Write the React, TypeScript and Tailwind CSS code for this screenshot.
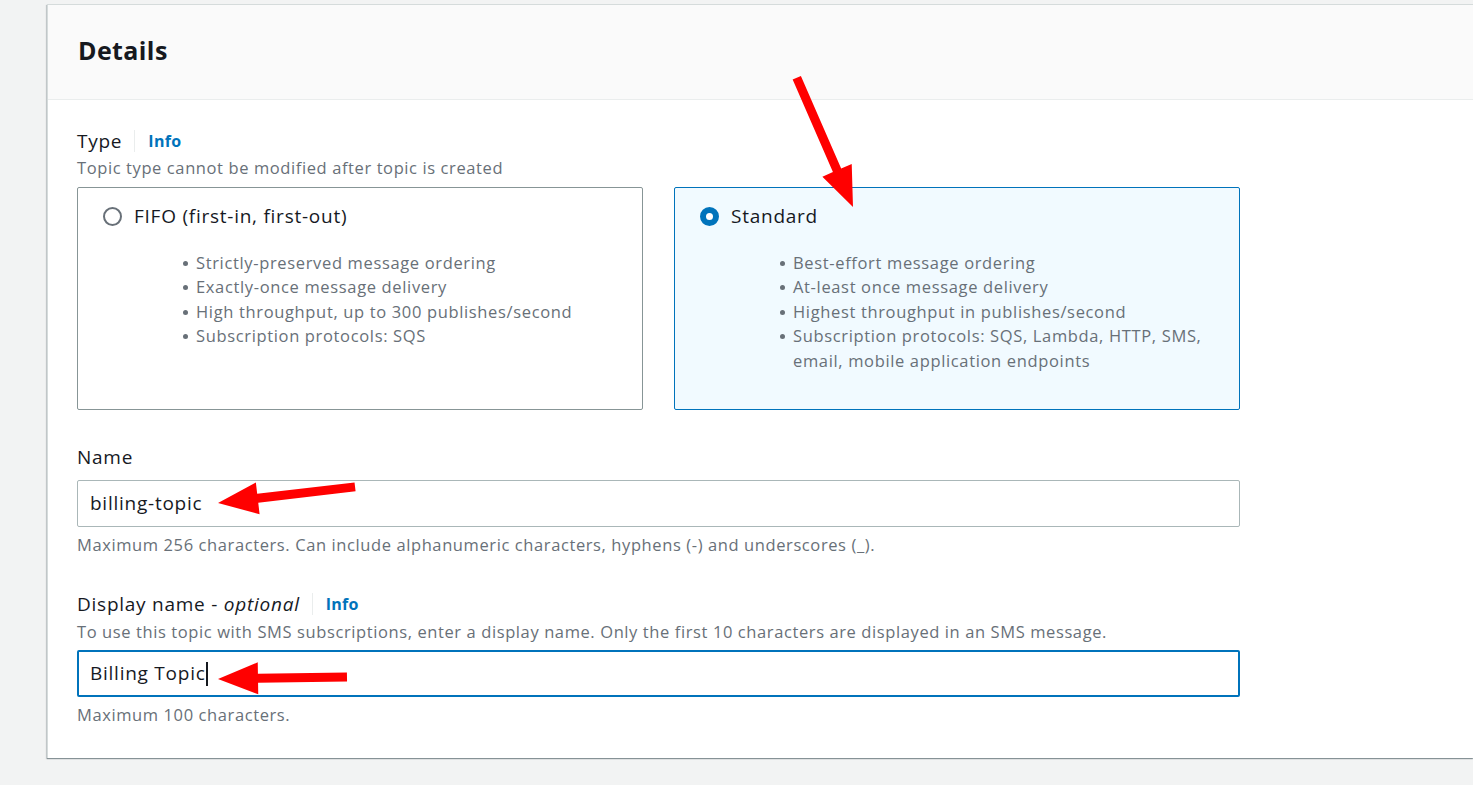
import React from "react";

const font = { fontFamily: '"Open Sans", "Noto Sans", Arial, sans-serif' };

function Arrow({ x, y, angle, length }: { x: number; y: number; angle: number; length: number }) {
  // drawn pointing along +x, tip at origin
  return (
    <g transform={`translate(${x} ${y}) rotate(${angle})`}>
      <polygon
        points={`${-length},-4.5 -40,-4.5 -40,-16 0,0 -40,16 -40,4.5 ${-length},4.5`}
        fill="#ff0000"
      />
    </g>
  );
}

function Radio({ checked }: { checked: boolean }) {
  if (checked) {
    return <span className="w-[19px] h-[19px] rounded-full border-[6px] border-[#0073bb] bg-white shrink-0" />;
  }
  return <span className="w-[19px] h-[19px] rounded-full border-2 border-[#687078] bg-white shrink-0" />;
}

function Tile({ label, items, checked }: { label: string; items: React.ReactNode[]; checked: boolean }) {
  return (
    <div
      className={`flex-1 h-[223px] rounded-[2px] border pl-[25px] pr-[20px] pt-[16px] ${
        checked ? "border-[#0073bb] bg-[#f1faff]" : "border-[#879596] bg-white"
      }`}
    >
      <div className="flex items-center gap-[12px] h-[24px]">
        <Radio checked={checked} />
        <span className="text-[19px] tracking-[0.75px] text-[#16191f] leading-[24px]">{label}</span>
      </div>
      <ul className="mt-[23px] pl-[80px] text-[16.5px] tracking-[0.65px] leading-[24.4px] text-[#687078]">
        {items.map((it, i) => (
          <li key={i} className="flex">
            <span className="w-[13px] shrink-0 flex pt-[10px]">
              <span className="w-[5px] h-[5px] rounded-full bg-[#687078]" />
            </span>
            <span>{it}</span>
          </li>
        ))}
      </ul>
    </div>
  );
}

function Label({ children, info }: { children: React.ReactNode; info?: boolean }) {
  return (
    <div className="flex items-center h-[24px] text-[19px] tracking-[0.75px] text-[#16191f]">
      <span>{children}</span>
      {info && (
        <>
          <span className="ml-[12px] w-px h-[22px] bg-[#eaeded]" />
          <span className="ml-[13px] text-[16px] tracking-[0.3px] font-bold text-[#0073bb]">Info</span>
        </>
      )}
    </div>
  );
}

const hint = "text-[16.5px] tracking-[0.6px] leading-[24px] text-[#687078]";

export default function App() {
  return (
    <div style={font} className="relative min-h-screen bg-[#f2f3f3] pt-[4px] pl-[47px] overflow-hidden">
      <div className="bg-white border-l border-t border-[#d5dbdb] shadow-[0_1px_1px_0_rgba(0,28,36,0.35),-1px_1px_1px_0_rgba(0,28,36,0.15)]">
        <div className="h-[95px] bg-[#fafafa] border-b border-[#eaeded] flex items-center px-[30px] pb-[4px]">
          <h2 className="text-[25px] tracking-[0.4px] font-bold text-[#16191f] leading-none">Details</h2>
        </div>
        <div className="pl-[29px] pt-[29px] pb-[31px] w-[1192px]">
          <Label info>Type</Label>
          <p className={`${hint} mt-[3px]`}>Topic type cannot be modified after topic is created</p>
          <div className="flex gap-[31px] mt-[7px]">
            <Tile
              label="FIFO (first-in, first-out)"
              checked={false}
              items={[
                "Strictly-preserved message ordering",
                "Exactly-once message delivery",
                "High throughput, up to 300 publishes/second",
                "Subscription protocols: SQS",
              ]}
            />
            <Tile
              label="Standard"
              checked
              items={[
                "Best-effort message ordering",
                "At-least once message delivery",
                "Highest throughput in publishes/second",
                <>
                  Subscription protocols: SQS, Lambda, HTTP, SMS,
                  <br />
                  email, mobile application endpoints
                </>,
              ]}
            />
          </div>

          <div className="mt-[35px]">
            <Label>Name</Label>
          </div>
          <div className="mt-[11px] h-[47px] border border-[#aab7b8] rounded-[2px] flex items-center px-[12px] text-[19px] tracking-[0.75px] text-[#16191f]">
            billing-topic
          </div>
          <p className={`${hint} mt-[6px]`}>
            Maximum 256 characters. Can include alphanumeric characters, hyphens (-) and underscores (_).
          </p>

          <div className="mt-[35px]">
            <Label info>
              Display name - <i>optional</i>
            </Label>
          </div>
          <p className={`${hint} mt-[4px]`}>
            To use this topic with SMS subscriptions, enter a display name. Only the first 10 characters are displayed in an SMS message.
          </p>
          <div className="mt-[6px] h-[47px] border-2 border-[#0073bb] rounded-[2px] flex items-center px-[11px] text-[19px] tracking-[0.75px] text-[#16191f]">
            Billing Topic
            <span className="w-[2px] h-[24px] bg-[#16191f]" />
          </div>
          <p className={`${hint} mt-[6px]`}>Maximum 100 characters.</p>
        </div>
      </div>

      <svg className="absolute inset-0 pointer-events-none" width="1473" height="785">
        <Arrow x={853} y={207} angle={66.5} length={141} />
        <Arrow x={218} y={503} angle={173.3} length={138} />
        <Arrow x={218} y={679} angle={179.1} length={129} />
      </svg>
    </div>
  );
}
